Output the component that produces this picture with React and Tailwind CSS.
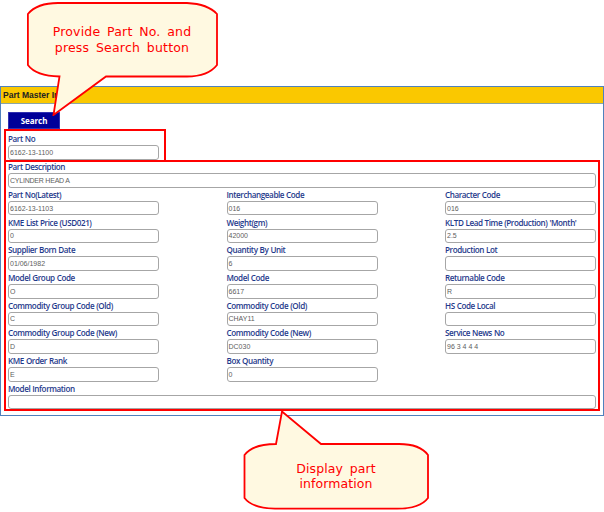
const labelStyle = "block whitespace-nowrap font-['Open_Sans',sans-serif] text-[8.1px] font-semibold leading-[12px] text-[#1f3a8c] tracking-[-0.41px] [word-spacing:0.3px]";

function Field({ label, value = "", tracking = "tracking-[0px]" }) {
  return (
    <label className="flex h-full min-w-0 flex-col">
      <span className={labelStyle}>{label}</span>
      <span className={`flex h-[14.6px] shrink-0 items-center whitespace-pre rounded-[3px] border border-[#a6a6a6] bg-white pl-[1px] font-['Liberation_Sans',Arial,sans-serif] text-[7px] leading-none text-[#606060] ${tracking}`}>
        {value}
      </span>
    </label>
  );
}

const rows = [
  [["Part No(Latest)", "6162-13-1103"], ["Interchangeable Code", "016"], ["Character Code", "016"]],
  [["KME List Price (USD021)", "0"], ["Weight(gm)", "42000"], ["KLTD Lead Time (Production) 'Month'", "2.5"]],
  [["Supplier Born Date", "01/06/1982"], ["Quantity By Unit", "6"], ["Production Lot", ""]],
  [["Model Group Code", "O"], ["Model Code", "6617"], ["Returnable Code", "R"]],
  [["Commodity Group Code (Old)", "C"], ["Commodity Code (Old)", "CHAY11"], ["HS Code Local", ""]],
  [["Commodity Group Code (New)", "D"], ["Commodity Code (New)", "DC030"], ["Service News No", "96 3 4 4 4"]],
  [["KME Order Rank", "E"], ["Box Quantity", "0"]],
];

export default function App() {
  return (
    <main className="relative h-[512px] w-[604px] overflow-hidden bg-white pt-[86px]">
      <section className="flex h-[330px] w-full flex-col border border-[#4f81bd] bg-white">
        <header className="h-[17px] shrink-0 border-b border-[#8aa5a5] bg-[#fac800] pl-[2px] font-['Liberation_Sans',Arial,sans-serif] text-[8.5px] font-bold leading-[16px] text-[#222]">
          Part Master Info
        </header>
        <div className="flex flex-col pl-[3px] pt-[8px]">
          <button className="ml-[4px] h-[17px] w-[52px] border border-[#3030b0] bg-[#000099] font-['Noto_Sans',sans-serif] text-[8px] font-bold leading-[15px] text-white">
            Search
          </button>
          <div className="h-[33px] w-[162px] border-2 border-[#ff0000] px-[2px] pt-[2.4px]">
            <div className="w-[151px]"><Field label="Part No" value="6162-13-1100" /></div>
          </div>
          <div className="-mt-[2px] h-[251px] w-[596px] border-2 border-[#ff0000] pl-[2px] pr-[3px]">
            <div className="-mt-[0.8px] flex flex-col">
              <div className="h-[27.7px] w-[588px]"><Field label="Part Description" value="CYLINDER HEAD A" tracking="tracking-[-0.22px]" /></div>
              {rows.map((row, i) => (
                <div key={i} className="grid h-[27.7px] w-[588px] grid-cols-[151px_151px_151px] justify-between">
                  {row.map(([label, value]) => <Field key={label} label={label} value={value} />)}
                </div>
              ))}
              <div className="h-[27.7px] w-[588px]"><Field label="Model Information" /></div>
            </div>
          </div>
        </div>
      </section>

      <div className="absolute left-[27px] top-[2px] h-[114px] w-[192px]">
        <svg className="absolute inset-0" width="192" height="114" viewBox="27 2 192 114" fill="#fff9e1" stroke="#ff0000" strokeWidth="1.8">
          <path d="M58 3H187Q208 4 217 14V65Q208 76.500 187 76.500H106L53.500 115L59.500 76.500Q36 76 27.900 65V14Q37 3 58 3Z" />
        </svg>
        <p className="relative pr-[2px] pt-[22px] text-center font-['DejaVu_Sans',Verdana,sans-serif] text-[12.5px] leading-[16px] tracking-[0.2px] [word-spacing:2.5px] text-[#ff0000]">
          Provide Part No. and<br />press Search button
        </p>
      </div>

      <div className="absolute left-[243px] top-[410px] h-[101px] w-[187px]">
        <svg className="absolute inset-0" width="187" height="101" viewBox="243 410 187 101" fill="#fff9e1" stroke="#ff0000" strokeWidth="1.8">
          <path d="M276 444L282 411.500L321 444H399Q420 444 428 455V498Q420 508.700 397 508.700H275Q252 508 244.500 498V455Q253 444 276 444Z" />
        </svg>
        <p className="relative pr-[1px] pt-[51px] text-center font-['DejaVu_Sans',Verdana,sans-serif] text-[12.5px] leading-[15px] tracking-[0.1px] [word-spacing:2.5px] text-[#ff0000]">
          Display part<br />information
        </p>
      </div>
    </main>
  );
}
